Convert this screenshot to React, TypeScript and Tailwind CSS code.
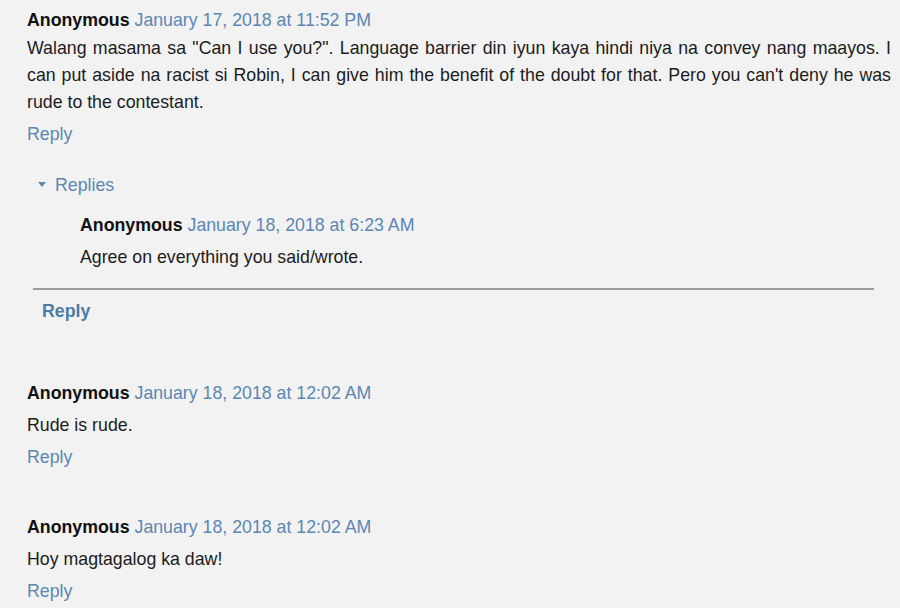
import React from "react";

function Header({ date }: { date: string }) {
  return (
    <div>
      <span className="font-bold text-[#111]">Anonymous</span>{" "}
      <span className="text-[#5b87b3]">{date}</span>
    </div>
  );
}

export default function App() {
  return (
    <div className="min-h-[608px] w-[900px] bg-[#f2f2f2] pl-[27px] pr-[9px] pt-[7px] font-['Liberation_Sans',Arial,sans-serif] text-[17.75px] leading-[27px] text-[#1c1c1c]">
      <Header date="January 17, 2018 at 11:52 PM" />
      <p className="mt-[1px] text-justify">
        Walang masama sa "Can I use you?". Language barrier din iyun kaya hindi niya na convey nang maayos. I can put aside na racist si Robin, I can give him the benefit of the doubt for that. Pero you can't deny he was rude to the contestant.
      </p>
      <div className="mt-[5px] text-[#5b87b3]">Reply</div>

      <div className="mt-[24px] flex items-center text-[#5b87b3]">
        <svg width="8" height="5" viewBox="0 0 8 5" className="ml-[11px] mr-[9px] mb-[2px]">
          <polygon points="0,0 8,0 4,5" fill="#5b87b3" />
        </svg>
        <span>Replies</span>
      </div>

      <div className="ml-[53px] mt-[13px]">
        <Header date="January 18, 2018 at 6:23 AM" />
        <p className="mt-[5px]">Agree on everything you said/wrote.</p>
      </div>

      <div className="ml-[6px] mr-[17px] mt-[17px] h-[2px] bg-[#9a9a9a]" />
      <div className="ml-[15px] mt-[8px] font-bold text-[#4d7ca8]">Reply</div>

      <div className="mt-[55px]">
        <Header date="January 18, 2018 at 12:02 AM" />
        <p className="mt-[5px]">Rude is rude.</p>
        <div className="mt-[5px] text-[#5b87b3]">Reply</div>
      </div>

      <div className="mt-[43px]">
        <Header date="January 18, 2018 at 12:02 AM" />
        <p className="mt-[5px]">Hoy magtagalog ka daw!</p>
        <div className="mt-[5px] text-[#5b87b3]">Reply</div>
      </div>
    </div>
  );
}
